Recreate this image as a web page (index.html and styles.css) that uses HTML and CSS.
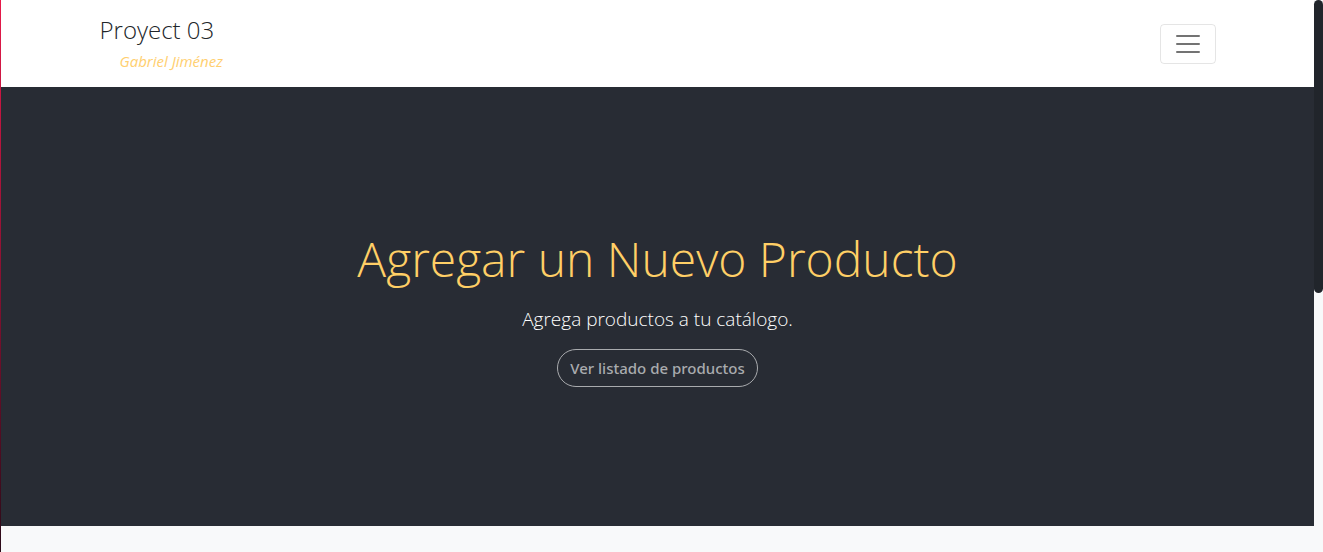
FILE: index.html
```html
<!DOCTYPE html>
<html lang="es">
<head>
<meta charset="utf-8">
<meta name="viewport" content="width=device-width, initial-scale=1">
<title>Proyect 03</title>
<link rel="stylesheet" href="styles.css">
</head>
<body>
<div class="frame">
  <div class="edge"></div>
  <div class="page">
    <header class="navbar">
      <div class="container">
        <a class="brand" href="#">
          <span class="brand-name">Proyect 03</span>
          <span class="brand-author">Gabriel Jiménez</span>
        </a>
        <button class="toggler" type="button" aria-label="Abrir menú">
          <svg class="toggler-icon" viewBox="0 0 30 30" aria-hidden="true">
            <path d="M4 7h22M4 15h22M4 23h22" fill="none" stroke="currentColor" stroke-width="2" stroke-linecap="round" stroke-miterlimit="10"/>
          </svg>
        </button>
      </div>
    </header>
    <main class="hero">
      <h1 class="hero-title">Agregar un Nuevo Producto</h1>
      <p class="hero-text">Agrega productos a tu catálogo.</p>
      <a class="hero-link" href="#">Ver listado de productos</a>
    </main>
  </div>
  <div class="scroll-track"><div class="scroll-thumb"></div></div>
</div>
</body>
</html>
```
FILE: styles.css
```css
* {
  box-sizing: border-box;
}

body {
  margin: 0;
  background: #f8f9fa;
  font-family: "Open Sans", "Noto Sans", sans-serif;
  font-size: 16px;
  line-height: 24px;
}

.frame {
  display: grid;
  grid-template-columns: 1px 1fr 9px;
  min-height: 100vh;
}

.edge {
  background: linear-gradient(#e8194a, #2a0a18);
}

.page {
  display: flex;
  flex-direction: column;
  padding-bottom: 26px;
}

.navbar {
  background: #fff;
  padding: 11px 0 14px;
}

.container {
  display: flex;
  align-items: center;
  justify-content: space-between;
  max-width: 1140px;
  margin: 0 auto;
  padding: 0 12px;
}

.brand {
  display: flex;
  flex-direction: column;
  color: #212529;
  text-decoration: none;
}

.brand-name {
  font-size: 24px;
  font-weight: 300;
  line-height: 38px;
}

.brand-author {
  padding-left: 20px;
  color: #ffcf70;
  font-size: 15px;
  font-style: italic;
  line-height: 24px;
}

.toggler {
  display: flex;
  margin-top: 3px;
  padding: 4px 12px;
  border: 1px solid rgba(0, 0, 0, 0.1);
  border-radius: 4px;
  background: transparent;
  color: rgba(0, 0, 0, 0.55);
}

.toggler-icon {
  width: 30px;
  height: 30px;
}

.hero {
  flex: 1;
  display: flex;
  flex-direction: column;
  align-items: center;
  justify-content: center;
  padding-top: 2px;
  background: #282c34;
  text-align: center;
}

.hero-title {
  margin: 0 0 15px;
  color: #ffcf66;
  font-size: 48px;
  font-weight: 300;
  line-height: 60px;
}

.hero-text {
  margin: 0 0 15px;
  color: #fff;
  font-size: 19px;
  font-weight: 300;
  line-height: 30px;
}

.hero-link {
  padding: 6px 12px;
  border: 1px solid #a9abae;
  border-radius: 19px;
  color: #a9abae;
  font-family: "Noto Sans", "Open Sans", sans-serif;
  font-size: 15px;
  font-weight: 500;
  text-decoration: none;
}

.scroll-track {
  background: #f8f9fa;
}

.scroll-thumb {
  height: 53vh;
  border-radius: 5px;
  background: #21252b;
}
```
